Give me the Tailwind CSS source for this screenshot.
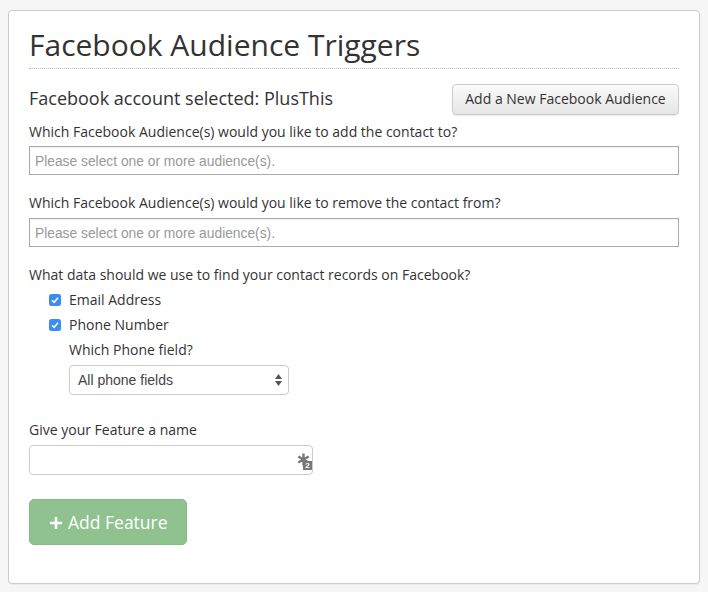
<!DOCTYPE html>
<html>
<head>
<meta charset="utf-8">
<script src="https://cdn.jsdelivr.net/npm/@tailwindcss/browser@4"></script>
</head>
<body class="bg-[#f6f6f6] font-['Open_Sans',sans-serif] text-[#333]">
<div class="w-[708px] h-[592px] pt-[10px] pl-[8px] overflow-hidden">
  <main class="w-[692px] h-[574px] bg-white border border-[#ccc] rounded-[4px] px-[20px] shadow-[0_1px_1px_rgba(0,0,0,0.05)]">
    <h1 class="h-[58px] pt-[11px] text-[30px] leading-[45px] border-b border-dotted border-[#bbb]">Facebook Audience Triggers</h1>
    <div class="flex justify-between items-center mt-[15px] h-[31px]">
      <div class="text-[18px] leading-[28px] pb-[3px]">Facebook account selected: PlusThis</div>
      <button class="w-[227px] h-[31px] pb-[2px] text-[14px] leading-[27px] text-center border border-[#ccc] rounded-[4px] bg-gradient-to-b from-[#fafafa] to-[#e6e6e6] text-[#333] shadow-[0_1px_1px_rgba(0,0,0,0.08)]">Add a New Facebook Audience</button>
    </div>
    <label class="block mt-[7px] text-[14px] leading-[20px]">Which Facebook Audience(s) would you like to add the contact to?</label>
    <div class="mt-[4px] h-[29px] border border-[#aaa] shadow-[inset_0_1px_1px_rgba(0,0,0,0.06)] pl-[5px] font-['Liberation_Sans',sans-serif] text-[13.8px] leading-[29px] text-[#999]">Please select one or more audience(s).</div>
    <label class="block mt-[18px] text-[14px] leading-[20px]">Which Facebook Audience(s) would you like to remove the contact from?</label>
    <div class="mt-[5px] h-[29px] border border-[#aaa] shadow-[inset_0_1px_1px_rgba(0,0,0,0.06)] pl-[5px] font-['Liberation_Sans',sans-serif] text-[13.8px] leading-[29px] text-[#999]">Please select one or more audience(s).</div>
    <label class="block mt-[18px] text-[14px] leading-[20px]">What data should we use to find your contact records on Facebook?</label>
    <div class="flex items-center mt-[2px] h-[25px] pl-[20px] gap-[8px] text-[14px]">
      <svg width="12" height="12" viewBox="0 0 12 12"><rect width="12" height="12" rx="2.5" fill="#3b8cf5"/><path d="M3 6.2 5.1 8.3 9 3.8" fill="none" stroke="#fff" stroke-width="1.6"/></svg>
      <span>Email Address</span>
    </div>
    <div class="flex items-center h-[25px] pl-[20px] gap-[8px] text-[14px]">
      <svg width="12" height="12" viewBox="0 0 12 12"><rect width="12" height="12" rx="2.5" fill="#3b8cf5"/><path d="M3 6.2 5.1 8.3 9 3.8" fill="none" stroke="#fff" stroke-width="1.6"/></svg>
      <span>Phone Number</span>
    </div>
    <div class="pl-[40px] h-[25px] text-[14px] leading-[25px]">Which Phone field?</div>
    <div class="ml-[40px] mt-[3px] w-[220px] h-[30px] border border-[#ccc] rounded-[4px] flex items-center justify-between pl-[8px] pr-[6px] font-['Liberation_Sans',sans-serif] text-[14px] text-[#444]">
      <span>All phone fields</span>
      <svg width="7" height="12" viewBox="0 0 7 12"><path d="M3.5 0 7 5H0Z M0 7H7L3.5 12Z" fill="#555"/></svg>
    </div>
    <label class="block mt-[25px] text-[14px] leading-[20px]">Give your Feature a name</label>
    <div class="relative mt-[5px] w-[284px] h-[30px] border border-[#ccc] rounded-[4px]">
      <svg class="absolute right-0 top-[7px]" width="16" height="14" viewBox="0 0 16 14">
        <path d="M7.5 .5V12.5M2.3 3.5 12.7 9.5M12.7 3.5 2.3 9.5" stroke="#777" stroke-width="2.4" fill="none"/>
      </svg>
      <span class="absolute right-0 top-[15px] w-[9px] h-[9px] bg-[#777] text-white font-['Liberation_Sans',sans-serif] font-bold text-[8px] leading-[9px] text-center">2</span>
    </div>
    <button class="flex items-center mt-[24px] w-[158px] h-[46px] pl-[20px] pt-[1px] gap-[6px] rounded-[5px] bg-[#8fc28e] border border-[#86b885] text-white text-[17.5px]">
      <svg width="12" height="12" viewBox="0 0 12 12"><path d="M6 0V12M0 6H12" stroke="#fff" stroke-width="2.6"/></svg>
      <span>Add Feature</span>
    </button>
  </main>
</div>
</body>
</html>
